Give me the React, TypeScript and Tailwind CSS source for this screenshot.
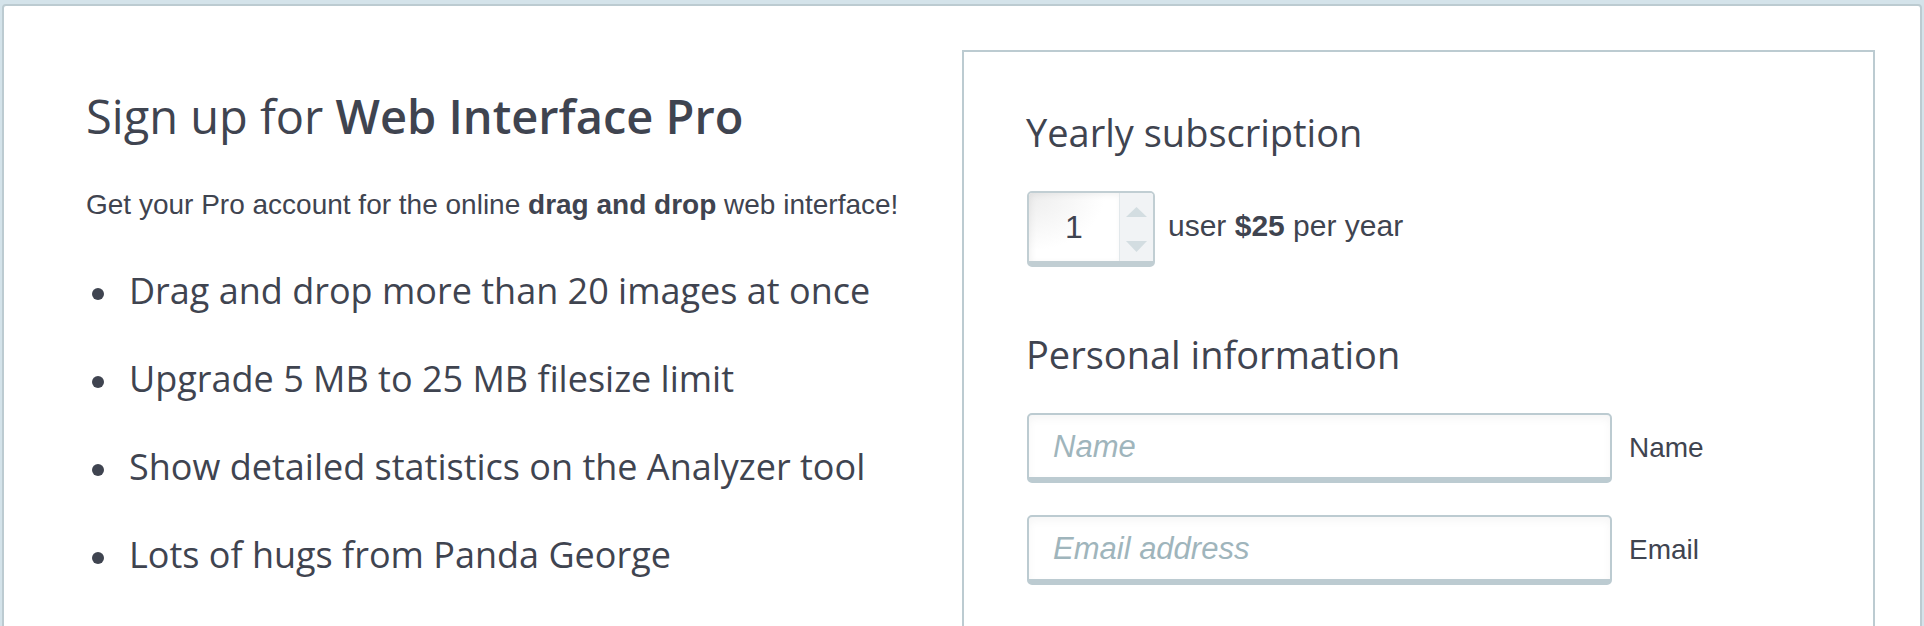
import React from "react";

const openSans = { fontFamily: '"Open Sans", "Noto Sans", sans-serif' };

function Bullet({ children }: { children: React.ReactNode }) {
  return (
    <li className="flex items-center h-[40px]">
      <span className="w-[12px] h-[12px] rounded-full bg-[#3f4450] ml-[6px] mr-[25px] mt-[6px] shrink-0" />
      <span className="text-[36px] leading-[40px] text-[#3f4450] font-['Open_Sans',sans-serif]">{children}</span>
    </li>
  );
}

function Spinner() {
  return (
    <div className="flex w-[128px] h-[76px] border-2 border-b-[6px] border-[#c1ced3] rounded-[5px] overflow-hidden bg-white">
      <div className="w-[90px] flex items-center justify-center bg-[radial-gradient(ellipse_at_top_left,#ededed_0%,#ffffff_60%)] shadow-[inset_2px_2px_6px_rgba(0,0,0,0.06)]">
        <span className="text-[32px] text-[#3f4450] font-['Liberation_Sans',Arial,sans-serif]">1</span>
      </div>
      <div className="flex-1 flex flex-col items-center justify-between pt-[14px] pb-[9px] border-l border-[#e2e8eb] bg-[#f1f3f5]">
        <svg width="21" height="10" viewBox="0 0 21 10"><path d="M0 10 L10.5 0 L21 10 Z" fill="#d3dde1" /></svg>
        <svg width="21" height="11" viewBox="0 0 21 11"><path d="M0 0 L10.5 11 L21 0 Z" fill="#d3dde1" /></svg>
      </div>
    </div>
  );
}

function Field({ placeholder, label }: { placeholder: string; label: string }) {
  return (
    <div className="flex items-center">
      <div className="w-[585px] h-[70px] border-2 border-b-[6px] border-[#bccbd1] rounded-[5px] bg-white shadow-[inset_0_4px_8px_rgba(0,0,0,0.04)] flex items-center pl-[24px] pt-[3px]">
        <span className="italic text-[31px] text-[#9fb5bc] font-['Liberation_Sans',Arial,sans-serif]">{placeholder}</span>
      </div>
      <span className="ml-[17px] text-[28px] text-[#3f4450] font-['Liberation_Sans',Arial,sans-serif]">{label}</span>
    </div>
  );
}

export default function App() {
  return (
    <div className="w-[1924px] h-[626px] bg-[#d4e3ea] pt-[4px] px-[2px] overflow-hidden">
      <div className="h-[700px] bg-white border-2 border-[#bccbd1] rounded-[4px] flex pt-[44px] pl-[45px] pr-[45px]">
        <div className="w-[913px] shrink-0 pl-[37px]">
          <h1 className="mt-[37px] text-[47px] leading-[58px] text-[#3f4450]" style={openSans}>
            Sign up for <span className="font-semibold">Web Interface Pro</span>
          </h1>
          <p className="mt-[44px] text-[28px] leading-[32px] text-[#3f4450] font-['Liberation_Sans',Arial,sans-serif]">
            Get your Pro account for the online <b>drag and drop</b> web interface!
          </p>
          <ul className="mt-[50px] flex flex-col gap-[48px]">
            <Bullet>Drag and drop more than 20 images at once</Bullet>
            <Bullet>Upgrade 5 MB to 25 MB filesize limit</Bullet>
            <Bullet>Show detailed statistics on the Analyzer tool</Bullet>
            <Bullet>Lots of hugs from Panda George</Bullet>
          </ul>
        </div>
        <div className="flex-1 border-2 border-[#bccbd1] pt-[58px] pl-[62px]">
          <h2 className="text-[38px] leading-[44px] text-[#3f4450]" style={openSans}>Yearly subscription</h2>
          <div className="mt-[37px] ml-[1px] flex items-center">
            <Spinner />
            <span className="ml-[13px] mb-[8px] text-[30px] text-[#3f4450] font-['Liberation_Sans',Arial,sans-serif]">
              user <b>$25</b> per year
            </span>
          </div>
          <h2 className="mt-[65px] text-[38px] leading-[44px] text-[#3f4450]" style={openSans}>Personal information</h2>
          <div className="mt-[37px] ml-[1px] flex flex-col gap-[32px]">
            <Field placeholder="Name" label="Name" />
            <Field placeholder="Email address" label="Email" />
          </div>
        </div>
      </div>
    </div>
  );
}
